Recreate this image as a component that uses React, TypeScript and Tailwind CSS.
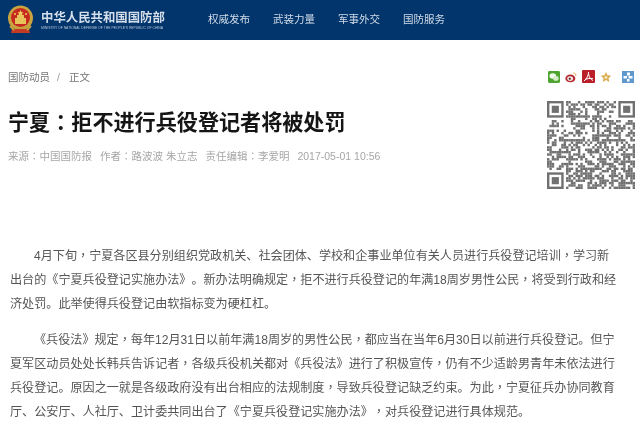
import { Fragment } from "react";

const font = { fontFamily: '"Liberation Sans", "Noto Sans CJK SC", sans-serif' };

function P({ text }: { text: string }) {
  return (
    <>
      {text.split(/([，：])/).map((part, i) =>
        part === "，" || part === "：" ? (
          <span key={i} className="font-['Noto_Sans_CJK_TC'] leading-[0]">{part}</span>
        ) : (
          <Fragment key={i}>{part}</Fragment>
        )
      )}
    </>
  );
}

function Para({ lines }: { lines: string[] }) {
  return (
    <>
      {lines.map((line, i) => (
        <div key={i} className={i === 0 ? "pl-[24px] whitespace-nowrap" : "whitespace-nowrap"}>
          <P text={line} />
        </div>
      ))}
    </>
  );
}

function Emblem() {
  return (
    <svg width="27" height="30" viewBox="0 0 27 30" className="shrink-0 blur-[0.4px]">
      <circle cx="13.5" cy="13" r="12.5" fill="#c9a33f" />
      <circle cx="13.5" cy="12.5" r="9.5" fill="#c62a1e" />
      <rect x="8" y="13" width="11" height="6" fill="#e7c45a" />
      <rect x="10" y="10" width="7" height="3" fill="#e7c45a" />
      <path d="M13.5 5l1 2.2 2.2.2-1.7 1.4.6 2.2-2.1-1.2-2.1 1.2.6-2.2-1.7-1.4 2.2-.2z" fill="#f0d060" />
      <circle cx="8" cy="9" r="1" fill="#f0d060" />
      <circle cx="19" cy="9" r="1" fill="#f0d060" />
      <path d="M5 24h17l1 4H4z" fill="#c33b24" />
      <path d="M3 21l4 4M24 21l-4 4" stroke="#c9a33f" strokeWidth="2" />
    </svg>
  );
}

function Icons() {
  return (
    <div className="flex items-center h-[13px] blur-[0.3px]">
      <svg width="12" height="12" viewBox="0 0 13 13">
        <rect width="13" height="13" rx="1.5" fill="#4ea42f" />
        <ellipse cx="5.2" cy="5.4" rx="3.6" ry="3" fill="#f2f8ee" />
        <ellipse cx="8.600" cy="8" rx="3" ry="2.500" fill="#d5ebc8" />
      </svg>
      <svg width="12" height="12" viewBox="0 0 13 13" className="ml-[5px]">
        <ellipse cx="5.800" cy="8" rx="5.400" ry="4.200" fill="#b3282d" />
        <ellipse cx="5.600" cy="8.200" rx="3.200" ry="2.500" fill="#f3e2df" />
        <circle cx="5.200" cy="8.400" r="1.200" fill="#4a2a2a" />
        <path d="M9 2.200c2 0 3 1.300 2.800 3.100" stroke="#e09a3a" strokeWidth="1" fill="none" />
      </svg>
      <svg width="13" height="13" viewBox="0 0 13 13" className="ml-[5px]">
        <rect width="13" height="13" rx="1" fill="#bb1f2a" />
        <path d="M6.600 2C6.400 5 5 9 2 11M6.600 4c.4 3 2 5.500 4.400 6.500M3 9.500c2.500-1 5-1.300 8-.8" stroke="#fff" strokeWidth="1" fill="none" />
      </svg>
      <svg width="12" height="12" viewBox="0 0 13 13" className="ml-[5px]">
        <path d="M6.500 1l1.700 3.700 4 .4-3 2.700.9 4-3.600-2.100-3.600 2.100.9-4-3-2.700 4-.4z" fill="#d9a94b" />
        <path d="M6.500 4.500l.8 1.500 1.600.2-1.200 1.100.3 1.600-1.500-.8-1.500.8.300-1.600-1.200-1.100 1.600-.2z" fill="#f3e6b8" />
      </svg>
      <svg width="12" height="12" viewBox="0 0 12 12" className="ml-[10px]">
        <rect width="12" height="12" fill="#5f98cf" />
        <rect x="5" y="1.500" width="3" height="3" fill="#fff" />
        <rect x="1.500" y="5" width="3.500" height="2.500" fill="#fff" />
        <rect x="6.500" y="5" width="4" height="2.500" fill="#fff" />
        <rect x="5" y="8" width="2.500" height="2.500" fill="#fff" />
      </svg>
    </div>
  );
}

function Qr() {
  const n = 37;
  const m = 88 / n;
  const cells: React.ReactElement[] = [];
  let s = 20170501;
  const inFinder = (x: number, y: number) =>
    (x < 8 && y < 8) || (x >= n - 8 && y < 8) || (x < 8 && y >= n - 8);
  for (let y = 0; y < n; y++) {
    for (let x = 0; x < n; x++) {
      s = (s * 1103515245 + 12345) & 0x7fffffff;
      if (!inFinder(x, y) && (s >> 16) % 100 < 50) {
        cells.push(<rect key={`${x}-${y}`} x={x * m} y={y * m} width={m + 0.05} height={m + 0.05} />);
      }
    }
  }
  const finder = (fx: number, fy: number) => (
    <g key={`${fx}-${fy}`}>
      <rect x={fx * m} y={fy * m} width={7 * m} height={7 * m} />
      <rect x={(fx + 1) * m} y={(fy + 1) * m} width={5 * m} height={5 * m} fill="#fff" />
      <rect x={(fx + 2) * m} y={(fy + 2) * m} width={3 * m} height={3 * m} />
    </g>
  );
  return (
    <svg width="88" height="88" viewBox="0 0 88 88" fill="#707070" className="blur-[0.5px]">
      {cells}
      {finder(0, 0)}
      {finder(n - 7, 0)}
      {finder(0, n - 7)}
    </svg>
  );
}

export default function App() {
  return (
    <div className="w-[640px] h-[425px] overflow-hidden bg-white [text-spacing-trim:space-all]" style={font}>
      <header className="h-[40px] bg-[#02356c] flex items-center pl-[7px]">
        <Emblem />
        <div className="ml-[7px] w-[130px] blur-[0.3px]">
          <div className="text-[12.4px] leading-[16px] font-bold text-[#d5dfeb] whitespace-nowrap">中华人民共和国国防部</div>
          <div className="text-[3.4px] leading-[5px] text-[#b9c7da] whitespace-nowrap">MINISTRY OF NATIONAL DEFENSE OF THE PEOPLE'S REPUBLIC OF CHINA</div>
        </div>
        <nav className="ml-[37px] flex gap-[23px] text-[10.5px] text-[#d3dde9] blur-[0.2px]">
          <span>权威发布</span>
          <span>武装力量</span>
          <span>军事外交</span>
          <span>国防服务</span>
        </nav>
      </header>

      <div className="flex justify-between pl-[8px] pr-[6px] pt-[30px] h-[61px]">
        <div className="text-[10.5px] leading-[14px] text-[#777] flex blur-[0.2px]">
          <span>国防动员</span>
          <span className="ml-[7px] mr-[9px] text-[#999]">/</span>
          <span>正文</span>
        </div>
        <Icons />
      </div>

      <div className="flex justify-between pl-[8px] pr-[5px]">
        <div>
          <h1 className="text-[21.1px] leading-[28px] mt-[8px] font-bold text-[#151515] blur-[0.2px]"><P text="宁夏：拒不进行兵役登记者将被处罚" /></h1>
          <div className="mt-[12px] text-[10.5px] leading-[14px] text-[#a6a6a6] flex gap-[8px] whitespace-nowrap blur-[0.2px]">
            <span><P text="来源：中国国防报" /></span>
            <span><P text="作者：路波波 朱立志" /></span>
            <span><P text="责任编辑：李爱明" /></span>
            <span>2017-05-01 10:56</span>
          </div>
        </div>
        <Qr />
      </div>

      <article className="mt-[55px] pl-[10px] w-[620px] text-[12.1px] leading-[24px] text-[#555] blur-[0.25px]">
        <Para lines={[
          "4月下旬，宁夏各区县分别组织党政机关、社会团体、学校和企事业单位有关人员进行兵役登记培训，学习新",
          "出台的《宁夏兵役登记实施办法》。新办法明确规定，拒不进行兵役登记的年满18周岁男性公民，将受到行政和经",
          "济处罚。此举使得兵役登记由软指标变为硬杠杠。",
        ]} />
        <div className="mt-[12px]">
          <Para lines={[
            "《兵役法》规定，每年12月31日以前年满18周岁的男性公民，都应当在当年6月30日以前进行兵役登记。但宁",
            "夏军区动员处处长韩兵告诉记者，各级兵役机关都对《兵役法》进行了积极宣传，仍有不少适龄男青年未依法进行",
            "兵役登记。原因之一就是各级政府没有出台相应的法规制度，导致兵役登记缺乏约束。为此，宁夏征兵办协同教育",
            "厅、公安厅、人社厅、卫计委共同出台了《宁夏兵役登记实施办法》，对兵役登记进行具体规范。",
          ]} />
        </div>
      </article>
    </div>
  );
}
